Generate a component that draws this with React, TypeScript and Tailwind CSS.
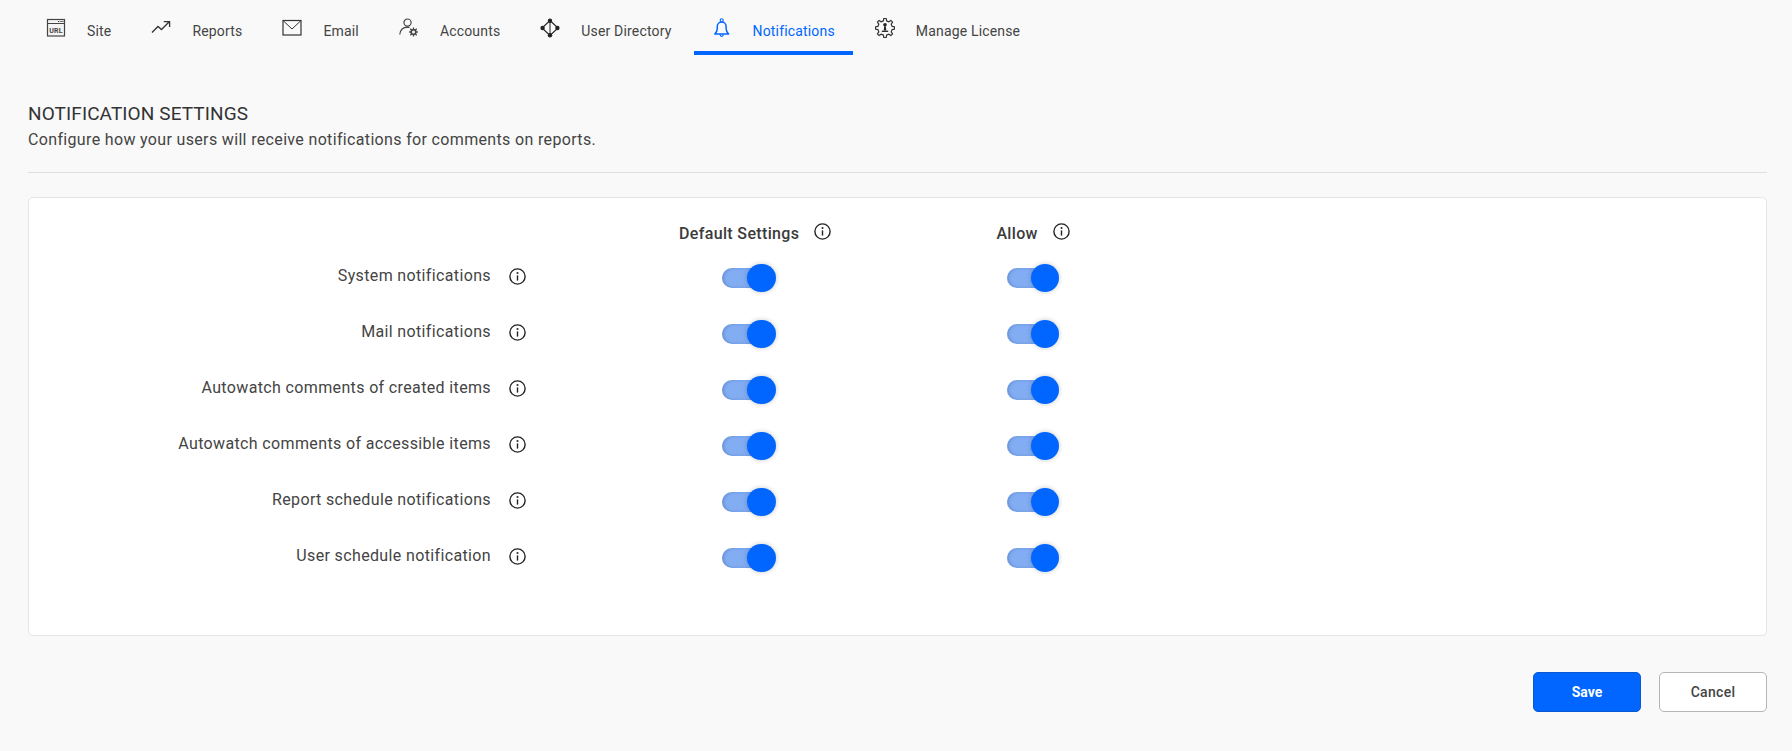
import React from "react";

const gearPath = (cx: number, cy: number, outer: number, inner: number, teeth: number) => {
  const pts: string[] = [];
  const step = (Math.PI * 2) / teeth;
  for (let i = 0; i < teeth; i++) {
    const a = i * step - Math.PI / 2;
    const w = step * 0.2;
    const at = (r: number, t: number) => `${(cx + r * Math.cos(t)).toFixed(2)} ${(cy + r * Math.sin(t)).toFixed(2)}`;
    pts.push(at(inner, a - w * 1.4), at(outer, a - w * 0.8), at(outer, a + w * 0.8), at(inner, a + w * 1.4));
  }
  return `M${pts.join("L")}Z`;
};

const SiteIcon = () => (
  <svg width="20" height="20" viewBox="0 0 20 20" fill="none" className="block">
    <rect x="1.5" y="1.5" width="17" height="16.5" fill="#f4f4f4" stroke="#444" strokeWidth="1.2" />
    <path d="M1.5 5.5H18.5" stroke="#444" strokeWidth="1" />
    <path d="M12 3.5h1.4M14.4 3.5h1.4M16.3 3.5h1.2" stroke="#444" strokeWidth="1" />
    <text x="10" y="14.6" textAnchor="middle" fontSize="7" fontWeight="700" fontFamily="Roboto, sans-serif" fill="#444">URL</text>
  </svg>
);
const ReportsIcon = () => (
  <svg width="20" height="20" viewBox="0 0 20 20" fill="none" className="block">
    <path d="M1 14.5 7 8.5 10.5 11.5 18 4M12.8 3.6H18.6V9" stroke="#333" strokeWidth="1.3" />
  </svg>
);
const EmailIcon = () => (
  <svg width="20" height="20" viewBox="0 0 20 20" fill="none" className="block">
    <rect x="1" y="2.5" width="18" height="14.5" stroke="#333" strokeWidth="1.2" />
    <path d="M1.5 3 10 11 18.5 3" stroke="#333" strokeWidth="1" />
  </svg>
);
const AccountsIcon = () => (
  <svg width="20" height="20" viewBox="0 0 20 20" fill="none" className="block">
    <circle cx="8.5" cy="4.6" r="3.6" stroke="#444" strokeWidth="1.2" />
    <path d="M0.800 16.500C1.300 12 4.300 9.300 8.500 9.200c.8 0 1.400.1 2 .3" stroke="#444" strokeWidth="1.2" />
    <path d={gearPath(14.5, 14, 4.6, 3.2, 8)} fill="#444" />
    <circle cx="14.5" cy="14" r="1.5" fill="#f9f9f9" />
  </svg>
);
const DirectoryIcon = () => (
  <svg width="20" height="20" viewBox="0 0 20 20" fill="none" className="block">
    <path d="M10 2.5 18 10 10 17.5 2 10Z" stroke="#222" strokeWidth="1.1" />
    <path d="M10 2.5V17.5" stroke="#222" strokeWidth="1" />
    <circle cx="10" cy="2.8" r="2.2" fill="#222" />
    <circle cx="10" cy="17.2" r="2.2" fill="#222" />
    <circle cx="2.6" cy="10" r="2.2" fill="#222" />
    <circle cx="17.4" cy="10" r="2.2" fill="#222" />
  </svg>
);
const BellIcon = () => (
  <svg width="20" height="20" viewBox="0 0 20 20" fill="none" className="block">
    <path d="M2.800 16c1.700-1.600 2.500-3.300 2.500-5.500V8.300C5.300 5.700 7.300 4 9.700 4s4.400 1.700 4.400 4.300v2.200c0 2.200.8 3.900 2.500 5.500Z" stroke="#0066ff" strokeWidth="1.5" strokeLinejoin="round" />
    <circle cx="9.700" cy="2.200" r="1.500" stroke="#0066ff" strokeWidth="1.1" />
    <path d="M8 16.500c.2 1.200.9 1.900 1.700 1.900s1.500-.7 1.700-1.900" stroke="#0066ff" strokeWidth="1.3" />
  </svg>
);
const LicenseIcon = () => (
  <svg width="20" height="20" viewBox="0 0 20 20" fill="none" className="block">
    <path d={gearPath(10, 10, 9.6, 7.3, 8)} stroke="#333" strokeWidth="1.2" strokeLinejoin="round" />
    <circle cx="10" cy="6.800" r="1.800" fill="#222" />
    <path d="M9.200 8.300h1.600l.5 4.200H8.700Z" fill="#222" />
    <path d="M6.800 13.300h6.400" stroke="#222" strokeWidth="1.3" />
  </svg>
);
const InfoIcon = () => (
  <svg width="17" height="17" viewBox="0 0 17 17" fill="none" className="block shrink-0">
    <circle cx="8.500" cy="8.500" r="7.600" stroke="#222" strokeWidth="1.4" />
    <circle cx="8.500" cy="5" r="1" fill="#222" />
    <path d="M8.500 7.400V12.600" stroke="#222" strokeWidth="1.4" />
  </svg>
);

const tabs = [
  { label: "Site", icon: <SiteIcon /> },
  { label: "Reports", icon: <ReportsIcon /> },
  { label: "Email", icon: <EmailIcon /> },
  { label: "Accounts", icon: <AccountsIcon /> },
  { label: "User Directory", icon: <DirectoryIcon /> },
  { label: "Notifications", icon: <BellIcon />, active: true },
  { label: "Manage License", icon: <LicenseIcon /> },
];

const rows = [
  "System notifications",
  "Mail notifications",
  "Autowatch comments of created items",
  "Autowatch comments of accessible items",
  "Report schedule notifications",
  "User schedule notification",
];

const Toggle = ({ wide }: { wide?: boolean }) => (
  <div className={`relative h-7 shrink-0 ${wide ? "w-[54px]" : "w-[52px]"}`}>
    <div className="absolute left-0 top-1 h-5 w-[44px] rounded-[10px] bg-[#82adf3] shadow-[inset_2px_0_3px_rgba(40,70,130,0.25)]" />
    <div className={`absolute right-0 top-0 h-7 rounded-full bg-[#0066ff] shadow-[0_0_5px_rgba(0,0,0,0.22)] ${wide ? "w-[29px]" : "w-7"}`} />
  </div>
);

export default function App() {
  return (
    <div className="h-[751px] overflow-hidden bg-[#f9f9f9] pl-[28px] pr-[25px] font-['Roboto',sans-serif] text-[#3b3b3b]">
      <nav className="flex h-[55px] items-start gap-1">
        {tabs.map((t) => (
          <div
            key={t.label}
            className={`flex h-[55px] items-start gap-[21px] border-b-4 px-[18px] pt-[18px] text-[14px] tracking-[0.17px] ${
              t.active ? "border-[#0066ff] text-[#0066ff]" : "border-transparent text-[#444]"
            }`}
          >
            {t.icon}
            <span className="mt-[5px] leading-[16px]">{t.label}</span>
          </div>
        ))}
      </nav>

      <header className="mt-[49px] h-[69px] border-b border-[#dfdfdf]">
        <h1 className="text-[19px] leading-[20px] tracking-[0.1px] text-[#333]">NOTIFICATION SETTINGS</h1>
        <p className="mt-[6px] text-[16px] leading-[20px] tracking-[0.34px] text-[#444]">
          Configure how your users will receive notifications for comments on reports.
        </p>
      </header>

      <section className="mt-[24px] h-[439px] rounded-[5px] border border-[#e2e6ea] bg-white pt-[24px]">
        <div className="flex h-[24px] items-center text-[16px] font-medium tracking-[0.35px] text-[#3b3b3b]">
          <span className="ml-[650px] leading-[20px]">Default Settings</span>
          <span className="ml-[15px] -mt-[6px]"><InfoIcon /></span>
          <span className="ml-[165px] leading-[20px]">Allow</span>
          <span className="ml-[15px] -mt-[6px]"><InfoIcon /></span>
        </div>
        <div className="mt-[4px] flex flex-col">
          {rows.map((r) => (
            <div key={r} className="flex h-[56px] items-center">
              <span className="w-[462px] pb-[4px] text-right text-[16px] tracking-[0.36px] text-[#444]">{r}</span>
              <span className="ml-[18px] pb-[4px]"><InfoIcon /></span>
              <span className="ml-[196px]"><Toggle wide /></span>
              <span className="ml-[231px]"><Toggle /></span>
            </div>
          ))}
        </div>
      </section>

      <footer className="mt-[36px] flex justify-end gap-[18px]">
        <button className="h-10 w-[108px] rounded-[5px] border border-[#0a58d0] bg-[#0066ff] text-[14px] font-bold text-white">Save</button>
        <button className="h-10 w-[108px] rounded-[5px] border border-[#b5b5b5] bg-white text-[14px] font-medium tracking-[0.3px] text-[#444]">Cancel</button>
      </footer>
    </div>
  );
}
